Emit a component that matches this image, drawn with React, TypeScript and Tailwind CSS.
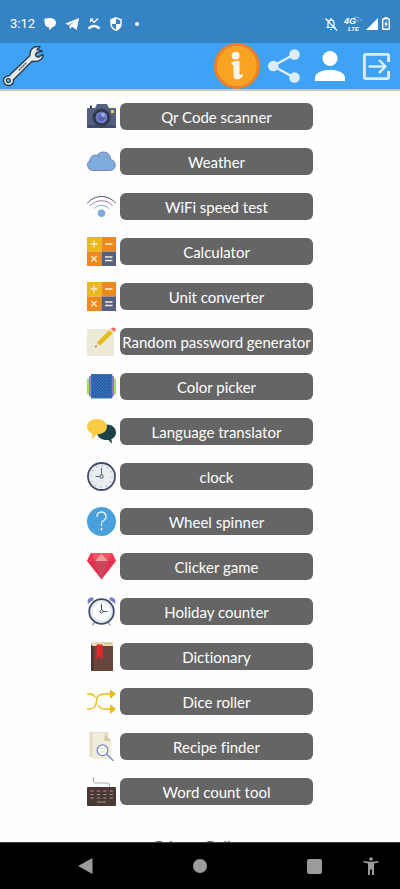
import React from 'react';

const CameraIcon = () => (
  <svg viewBox="0 0 29 29" className="size-full" aria-hidden="true">
    <path d="M3 6V3.5h2V6z" fill="#3f4560" />
    <path d="M1 6h7l2-4h10l2 4h6q1 0 1 1v18q0 1-1 1H1q-1 0-1-1V7q0-1 1-1z" fill="#556080" />
    <path d="M0 23h29v2q0 1-1 1H1q-1 0-1-1z" fill="#434c6d" />
    <circle cx="14.5" cy="15.5" r="9.3" fill="#3a4158" />
    <circle cx="14.5" cy="15.5" r="7.6" fill="#2b2f42" />
    <circle cx="14.5" cy="15.5" r="6" fill="#6c7fc4" />
    <circle cx="14.5" cy="15.5" r="3.2" fill="#5362b4" />
    <circle cx="16" cy="13" r="2" fill="#8fb4ea" />
    <circle cx="14.5" cy="15" r="1" fill="#e14b6b" />
    <rect x="24" y="8" width="3" height="3" fill="#efce4a" />
  </svg>
);

const CloudIcon = () => (
  <svg viewBox="0 0 29 29" className="size-full" aria-hidden="true">
    <path
      d="M6 23.5A5.6 5.6 0 0 1 3 13.2C3 9.4 7 7 10.2 8.6 12.4 3.8 20.8 3.6 23 9.4q.8 1.6.4 3.2A5.5 5.5 0 0 1 23.5 23.5z"
      fill="#7facdc"
      stroke="#7b82bd"
    />
    <path d="M10.2 8.6q1.3.5 2 1.6M3 13.2q-.4 1 0 2" fill="none" stroke="#7b82bd" />
  </svg>
);

const WifiIcon = () => (
  <svg viewBox="0 0 29 29" className="size-full" fill="none" strokeLinecap="round" aria-hidden="true">
    <path d="M.5 11C8 2.2 21 2.2 28.5 11" stroke="#454c69" />
    <path d="M3.5 13.5C9.5 7 19.5 7 25.5 13.5" stroke="#a478b8" />
    <path d="M7 16.5C11.5 12.3 17.5 12.3 22 16.5" stroke="#7facdc" />
    <circle cx="14.5" cy="21.3" r="3.7" fill="#7facdc" />
  </svg>
);

const CalculatorIcon = () => (
  <svg viewBox="0 0 29 29" className="size-full" aria-hidden="true">
    <path d="M0 0h14.5v14.5H0z" fill="#ebba16" />
    <path d="M14.5 0H29v14.5H14.5zM0 14.5h14.5V29H0z" fill="#ed8a19" />
    <path d="M14.5 14.5H29V29H14.5z" fill="#556080" />
    <path
      d="M7 3.5v7M3.5 7h7M18 7h7.5M4.3 19l5.4 5.5M9.7 19l-5.4 5.5M18 20h7.5M18 23.5h7.5"
      stroke="#f5ecd8"
      strokeWidth="1.3"
    />
  </svg>
);

const PencilIcon = () => (
  <svg viewBox="0 0 29 29" className="size-full" aria-hidden="true">
    <path d="M0 2h27v27H0z" fill="#ece9d8" />
    <path d="M8 20.5l2-5 3 3z" fill="#f3d9b5" />
    <path d="M8 20.5l.8-2 1.200 1.200z" fill="#444" />
    <path d="M10 15.5L22.5 3l3.2 3.2L13 18.6z" fill="#ebba16" />
    <path d="M22.5 3L24 1.6l3.200 3.200-1.500 1.400z" fill="#e5e0cc" />
    <path d="M24 1.5q2-2 4-.4 1.700 1.900-.6 4z" fill="#ee6a5f" />
  </svg>
);

const ColorIcon = () => (
  <svg viewBox="0 0 29 29" className="size-full" aria-hidden="true">
    <defs>
      <pattern id="weave" width="3" height="3" patternUnits="userSpaceOnUse">
        <path d="M0 0l3 3M3 0L0 3" stroke="#25488c" strokeWidth=".5" />
      </pattern>
    </defs>
    <path d="M0 6.5h29v16H0z" fill="#9be063" />
    <path d="M2 4h25v20.5H2z" fill="#9c7cc4" />
    <path d="M4 2h21.3v24.5H4z" fill="#3474bc" />
    <path d="M5 3h19.3v22.5H5z" fill="url(#weave)" />
  </svg>
);

const ChatIcon = () => (
  <svg viewBox="0 0 29 29" className="size-full" aria-hidden="true">
    <path d="M19.5 7.5c5.5 0 9.5 3.500 9.500 8 0 3-1.700 5.300-4.600 6.700q.2 2.300.9 4.300-2.300-1.200-3.800-3.500c-6.200.6-11.500-2.500-11.500-7.500s4-8 9.500-8z" fill="#1d4348" />
    <path d="M10 2c5.700 0 10 3.300 10 7.700S15.700 17.300 9.600 17.300Q7.700 20.200 4.700 22q.8-2.600.6-5.500C2 15.200 0 12.700 0 9.700 0 5.300 4.300 2 10 2z" fill="#fccb46" />
  </svg>
);

const ClockIcon = () => (
  <svg viewBox="0 0 29 29" className="size-full" fill="none" aria-hidden="true">
    <circle cx="14.5" cy="14.5" r="13.5" fill="#e9eef0" stroke="#454c69" strokeWidth="1.8" />
    <circle cx="14.5" cy="14.5" r="10.6" stroke="#8a84bd" strokeWidth="1.2" strokeDasharray=".8 4.75" />
    <path d="M14.5 6v7M8.5 14.5H13" stroke="#556080" />
    <circle cx="14.5" cy="14.5" r="1.7" fill="#e9eef0" stroke="#454c69" />
  </svg>
);

const QuestionIcon = () => (
  <svg viewBox="0 0 29 29" className="size-full" fill="none" aria-hidden="true">
    <circle cx="14.5" cy="14.5" r="14.5" fill="#48a0dc" />
    <path
      d="M10 9.5a4.5 4.5 0 1 1 6.600 4q-2.100 1.200-2.100 3.500v1.500"
      stroke="#f0f7fc"
      strokeWidth="1.3"
      strokeLinecap="round"
    />
    <path d="M14.5 21.5v1.5" stroke="#f0f7fc" strokeWidth="1.5" strokeLinecap="round" />
  </svg>
);

const GemIcon = () => (
  <svg viewBox="0 0 29 29" className="size-full" aria-hidden="true">
    <path d="M4 1h21l4 8-14.500 18.500L0 9z" fill="#e0304f" />
    <path d="M8 9h13l-6.500 18.500z" fill="#cb465f" />
    <path d="M14.500 1L21 9H8z" fill="#f49a98" />
    <path d="M4 1h10.500L8 9zM25 1H14.500L21 9z" fill="#ee5468" />
    <path d="M4 1l4 8H0zM25 1l-4 8h8z" fill="#f2374f" />
  </svg>
);

const AlarmIcon = () => (
  <svg viewBox="0 0 29 29" className="size-full" fill="none" aria-hidden="true">
    <path d="M7.500 25.500l-2 3M21.500 25.500l2 3" stroke="#7983bb" strokeWidth="1.2" />
    <path d="M6 3.500l2 3M23 3.500l-2 3" stroke="#454c69" />
    <path d="M1 7Q-.5 2 3.500.5 6-.5 7 2zM28 7q1.500-5-2.500-6.500Q23-.5 22 2z" fill="#7983bb" />
    <circle cx="14.5" cy="14.5" r="12.3" fill="#e4ebee" stroke="#454c69" strokeWidth="1.8" />
    <circle cx="14.5" cy="14.5" r="9" fill="#fbfcfc" />
    <path d="M14.500 7v6M16 14.500h4.500" stroke="#454c69" />
    <circle cx="14.5" cy="14.5" r="1.5" fill="#fff" stroke="#454c69" />
  </svg>
);

const BookIcon = () => (
  <svg viewBox="0 0 29 29" className="size-full" aria-hidden="true">
    <path d="M4 4V2q0-2 2-2h20v5H4z" fill="#e7d9b4" />
    <path d="M17 1.500h8" stroke="#c9b98c" strokeWidth=".8" />
    <path d="M4 2.500Q4.500 4 6.500 4H26v25H5.500Q4 29 4 27.500z" fill="#6a453e" />
    <path d="M4 2.500Q4.500 4 6.500 4v25h-1Q4 29 4 27.500z" fill="#53352f" />
    <path d="M9.500 2.500h6V18l-3-3.500-3 3.500z" fill="#dc2a28" />
  </svg>
);

const ShuffleIcon = () => (
  <svg viewBox="0 0 29 29" className="size-full" fill="none" aria-hidden="true">
    <path d="M.5 7H3q3.500 0 5 3M23 7h-5.500C12 7 9.500 10 9.500 14c0 5-3 8-6.500 8H.5M11.500 18.500q2 3.500 6 3.500H23" stroke="#ebba16" strokeWidth="1.4" strokeLinecap="round" />
    <path d="M23 2.200L29 7l-6 5zM23 17.200l6 4.800-6 5z" fill="#ebba16" />
  </svg>
);

const RecipeIcon = () => (
  <svg viewBox="0 0 29 29" className="size-full" fill="none" aria-hidden="true">
    <path d="M2.500 0h19v25h-19z" fill="#e3dcc0" />
    <path d="M5.500 1h12l7 8v18h-19z" fill="#f0eddd" />
    <path d="M17.500 2v7h7z" fill="#d2caa8" />
    <circle cx="15.5" cy="18.3" r="5.4" fill="#fbfbf6" stroke="#7385c4" strokeWidth="1.2" />
    <path d="M11 16.500h7M12.500 20h6" stroke="#dcd4b4" />
    <path d="M19.500 22.300l6.800 6.400" stroke="#7385c4" strokeWidth="1.4" />
  </svg>
);

const KeyboardIcon = () => (
  <svg viewBox="0 0 29 29" className="size-full" fill="none" aria-hidden="true">
    <path d="M6.500 0v4.500Q6.500 6 8 6h12q2.500 0 2.500 2v2.500" stroke="#b4aba9" />
    <rect y="10" width="29" height="19" rx="1" fill="#4b3835" />
    <path d="M3.500 14h23M3.500 17.500h23M3.500 21h23" stroke="#a89994" strokeDasharray="3.200 3.200" />
    <path d="M10 25h9" stroke="#a89994" />
  </svg>
);

const WrenchIcon = () => (
  <svg viewBox="0 0 42 42" className="size-full" aria-hidden="true">
    <path
      d="M40.500 6L35 7.500l-1.500 2 .6 1.800 2 .7 5-2.500q.3 3.500-2.700 5.500-3.400 2.200-8.400 1.200L11.500 34.700q.5 4.800-4 5.800-5 .5-6-4.300-.5-4.700 5.500-5.500L28 10.500q-.5-4.200 2-6.800Q33 1 38 1.700L35 4.500z"
      fill="#e6e8ea"
      stroke="#28414f"
      strokeWidth="1.4"
      strokeLinejoin="round"
    />
    <circle cx="6.3" cy="35.6" r="2" fill="#6db7ee" stroke="#28414f" strokeWidth="1.2" />
    <path d="M17 25.200l7.500-7.500" stroke="#4e606b" strokeWidth="1.6" strokeDasharray="2 .7" />
  </svg>
);

const tools = [
  { label: 'Qr Code scanner', Icon: CameraIcon },
  { label: 'Weather', Icon: CloudIcon },
  { label: 'WiFi speed test', Icon: WifiIcon },
  { label: 'Calculator', Icon: CalculatorIcon },
  { label: 'Unit converter', Icon: CalculatorIcon },
  { label: 'Random password generator', Icon: PencilIcon },
  { label: 'Color picker', Icon: ColorIcon },
  { label: 'Language translator', Icon: ChatIcon },
  { label: 'clock', Icon: ClockIcon },
  { label: 'Wheel spinner', Icon: QuestionIcon },
  { label: 'Clicker game', Icon: GemIcon },
  { label: 'Holiday counter', Icon: AlarmIcon },
  { label: 'Dictionary', Icon: BookIcon },
  { label: 'Dice roller', Icon: ShuffleIcon },
  { label: 'Recipe finder', Icon: RecipeIcon },
  { label: 'Word count tool', Icon: KeyboardIcon }
];

const StatusBar = () => (
  <div className="shrink-0 h-[43px] pt-1 px-2.5 flex items-center justify-between bg-[#3583c3] text-white">
    <div className="flex items-center gap-2">
      <span className="w-[25px] text-[13px] leading-5 font-[Roboto,sans-serif]">3:12</span>
      <svg viewBox="0 0 14 14" className="size-3.5" fill="currentColor" aria-hidden="true">
        <path d="M1 2.500Q2.500 1 5 1.300 7 .7 9 1.300q4 1 4 4.500 0 3.500-3.500 4.200-1 2-3.500 3l.2-2.700Q2 10 1.800 6.500 1.800 4.500 1 2.500z" />
      </svg>
      <svg viewBox="0 0 14 14" className="size-3.5" fill="currentColor" aria-hidden="true">
        <path d="M0 6.700L14 1l-2.300 12-4.500-3.300L5 12 4.400 8.500 10.500 4 3.500 8z" />
      </svg>
      <svg viewBox="0 0 14 14" className="size-3.5" fill="none" aria-hidden="true">
        <path d="M1.500 11.500Q7 6.500 12.500 11.500" stroke="currentColor" strokeWidth="2.600" />
        <path d="M3.500 5V2H6.500M3.700 2.200L7 5.500 11 1.500" stroke="currentColor" strokeWidth="1.200" />
      </svg>
      <svg viewBox="0 0 14 14" className="size-3.5" aria-hidden="true">
        <path d="M7 .8l5 2v4q0 4.500-5 6.500-5-2-5-6.500v-4z" fill="#3583c3" stroke="currentColor" strokeWidth="1.400" />
        <path d="M7 1v6H2V3zM7 7h5q-.5 4.500-5 6z" fill="currentColor" />
      </svg>
      <span className="ml-1 size-1 rounded-full bg-white" />
    </div>
    <div className="flex items-center gap-1">
      <svg viewBox="0 0 14 14" className="size-3.5" fill="none" stroke="currentColor" strokeWidth="1.200" aria-hidden="true">
        <path d="M4 10.500V6q0-3 3-3.200Q10 3 10 6v4.500M2.500 10.500h9M6 12.500h2M7 1v2M1.500 1.500l11.500 12" />
      </svg>
      <div className="relative w-5 h-4 pl-0.5 font-['Liberation_Sans',sans-serif] italic font-bold">
        <span className="block text-[9px] leading-[10px]">4G</span>
        <span className="block pl-1 text-[6px] leading-[6px]">LTE</span>
        <svg viewBox="0 0 8 6" className="absolute right-0 top-0 w-2 h-1.5 opacity-40" fill="none" stroke="currentColor" aria-hidden="true">
          <path d="M0 2Q4-1 8 5M1 4q2-1 4 2" />
        </svg>
      </div>
      <svg viewBox="0 0 12 12" className="size-3" fill="currentColor" aria-hidden="true">
        <path d="M12 0v12H0z" />
      </svg>
      <svg viewBox="0 0 8 13" className="w-2 h-[13px]" fill="none" aria-hidden="true">
        <path d="M2.500 0h3v1h-3z" fill="currentColor" />
        <rect x=".7" y="1.700" width="6.600" height="10.600" rx="1" stroke="currentColor" strokeWidth="1.400" />
        <path d="M4.700 3.500L2 7.500h1.700L3.400 10.500 6 6.500H4.300z" fill="currentColor" />
      </svg>
    </div>
  </div>
);

const Header = () => (
  <header className="shrink-0 h-12 pl-0.5 pr-2.5 flex items-start justify-between bg-[#40a2f5] border-b-2 border-[#c5c9cc]">
    <div className="mt-0.5 size-[42px]">
      <WrenchIcon />
    </div>
    <div className="h-full flex items-center">
      <button type="button" aria-label="About" className="mr-2 size-[46px]">
        <svg viewBox="0 0 46 46" className="size-full" aria-hidden="true">
          <circle cx="23" cy="23" r="21.5" fill="#f9a323" stroke="#ed8029" strokeWidth="3" />
          <circle cx="21.7" cy="12.7" r="3.9" fill="#f7f5f2" />
          <path d="M17.500 19.300q4-1.300 8-1.300v12.500q0 2 1.300 1.300l2-1q.5 3.200-2.800 5-3.500 1.700-5.500-.3-1-1-1-3.500V23q0-1.500-2-1.500z" fill="#f7f5f2" />
        </svg>
      </button>
      <button type="button" aria-label="Share" className="mr-[15px] w-8 h-[34px]">
        <svg viewBox="0 0 32 34" className="size-full" aria-hidden="true">
          <path d="M26 5.500L5 17l21 11.500" fill="none" stroke="#dcecfb" strokeWidth="2.500" />
          <circle cx="26.5" cy="5.5" r="5.3" fill="#dcecfb" />
          <circle cx="5.3" cy="17" r="5.3" fill="#dcecfb" />
          <circle cx="26.5" cy="28.5" r="5.3" fill="#dcecfb" />
        </svg>
      </button>
      <button type="button" aria-label="Account" className="mr-[18px] size-[30px]">
        <svg viewBox="0 0 30 30" className="size-full" fill="#fff" aria-hidden="true">
          <circle cx="15" cy="7.5" r="7.5" />
          <path d="M0 30v-3.500C0 21.500 8 18.700 15 18.700s15 2.800 15 7.800V30z" />
        </svg>
      </button>
      <button type="button" aria-label="Log out" className="size-[27px]">
        <svg viewBox="0 0 27 27" className="size-full" fill="none" stroke="#deedfb" strokeWidth="2.8" aria-hidden="true">
          <path d="M25.600 9V3q0-1.600-1.600-1.600H3Q1.400 1.400 1.400 3v21q0 1.600 1.600 1.600h21q1.600 0 1.600-1.600v-6" />
          <path d="M5.500 13.500h17M16 7l6.500 6.500L16 20" strokeWidth="2.4" />
        </svg>
      </button>
    </div>
  </header>
);

const NavBar = () => (
  <nav className="shrink-0 h-[47px] grid grid-cols-7 place-items-center bg-black text-[#9b9b9b] border-t border-[#3a3a3a]">
    <button type="button" aria-label="Back" className="col-start-2 size-4">
      <svg viewBox="0 0 16 16" className="size-full" fill="currentColor" aria-hidden="true">
        <path d="M14.500 0v16L0 8z" />
      </svg>
    </button>
    <button type="button" aria-label="Home" className="col-start-4 size-3.5 rounded-full bg-current" />
    <button type="button" aria-label="Recent apps" className="col-start-6 size-[15px] rounded-xs bg-current" />
    <button type="button" aria-label="Accessibility" className="col-start-7 w-4 h-[18px]">
      <svg viewBox="0 0 16 18" className="size-full" fill="currentColor" aria-hidden="true">
        <circle cx="8" cy="2" r="1.8" />
        <path d="M.5 4q7.500 1.500 15 0v1.600L11 6.400V18H9v-5.500H7V18H5V6.400L.5 5.600z" />
      </svg>
    </button>
  </nav>
);

const App = () => {
  return (
    <div className="h-screen flex flex-col bg-[#fefefe] font-[Lato,sans-serif] [font-variant-ligatures:none]">
      <StatusBar />
      <Header />

      {/* Tool list */}
      <main className="flex-1 min-h-0 overflow-hidden pt-[11px] flex flex-col items-center">
        <ul className="flex flex-col gap-4">
          {tools.map(({ label, Icon }) => (
            <li key={label} className="flex items-center gap-1">
              <span className="size-[29px]">
                <Icon />
              </span>
              <button
                type="button"
                className="w-[193px] h-[27px] rounded-md bg-[#656565] text-white text-[15px] leading-5 whitespace-nowrap"
              >
                {label}
              </button>
            </li>
          ))}
        </ul>
        <a href="#privacy" className="mt-[30px] shrink-0 text-[15px] leading-5 text-[#666]">
          Privacy Policy
        </a>
      </main>

      <NavBar />
    </div>
  );
};

export default App;
